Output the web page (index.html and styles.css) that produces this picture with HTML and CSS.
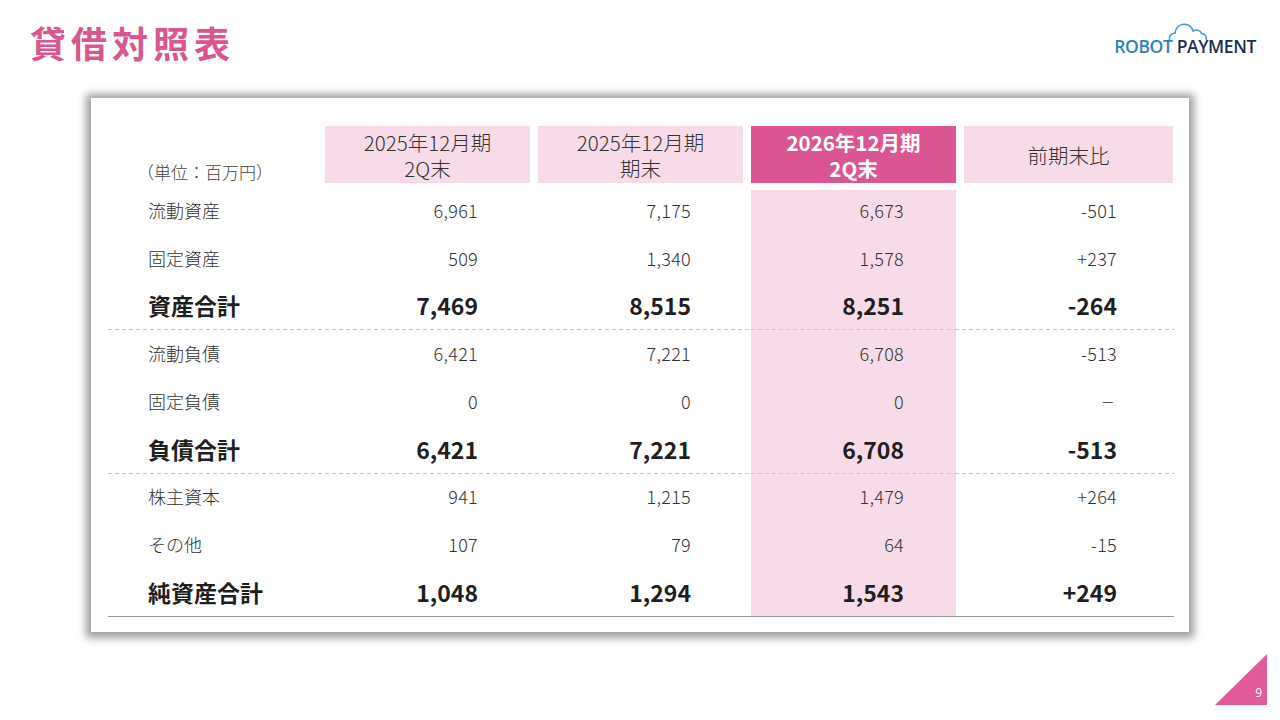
FILE: index.html
```html
<!DOCTYPE html>
<html lang="ja">
<head>
<meta charset="utf-8">
<title>貸借対照表</title>
<link rel="stylesheet" href="styles.css">
</head>
<body>
<div class="slide">
  <header class="top">
    <h1 class="title">貸借対照表</h1>
    <div class="logo">
      <svg class="cloud" viewBox="0 0 40 17" width="40" height="17">
        <path d="M1.5 16.5 C1.2 12.5 3.5 10 7 10.3 C7.5 4.5 11.5 1 16.5 1.2 C21 1.4 24 4.2 25 8 C28 6 32.5 7 33.5 10.5 C36.8 10.6 38.6 13 38.4 16.5" fill="none" stroke="#3f9ad6" stroke-width="1.6" stroke-linecap="round"/>
      </svg>
      <div class="logo-text"><span class="robot">ROBOT</span> <span class="payment">PAYMENT</span></div>
    </div>
  </header>

  <section class="card">
    <div class="grid head">
      <div class="unit">（単位：百万円）</div>
      <div class="hcell">2025年12月期<br>2Q末</div>
      <div class="hcell">2025年12月期<br>期末</div>
      <div class="hcell hl">2026年12月期<br>2Q末</div>
      <div class="hcell">前期末比</div>
    </div>

    <div class="body">
      <div class="grid row first">
        <div class="label">流動資産</div><div class="num">6,961</div><div class="num">7,175</div><div class="num pk">6,673</div><div class="num">-501</div>
      </div>
      <div class="grid row">
        <div class="label">固定資産</div><div class="num">509</div><div class="num">1,340</div><div class="num pk">1,578</div><div class="num">+237</div>
      </div>
      <div class="grid row total">
        <div class="label">資産合計</div><div class="num">7,469</div><div class="num">8,515</div><div class="num pk">8,251</div><div class="num">-264</div>
      </div>
      <div class="grid row sep">
        <div class="label">流動負債</div><div class="num">6,421</div><div class="num">7,221</div><div class="num pk">6,708</div><div class="num">-513</div>
      </div>
      <div class="grid row">
        <div class="label">固定負債</div><div class="num">0</div><div class="num">0</div><div class="num pk">0</div><div class="num dash">－</div>
      </div>
      <div class="grid row total">
        <div class="label">負債合計</div><div class="num">6,421</div><div class="num">7,221</div><div class="num pk">6,708</div><div class="num">-513</div>
      </div>
      <div class="grid row sep">
        <div class="label">株主資本</div><div class="num">941</div><div class="num">1,215</div><div class="num pk">1,479</div><div class="num">+264</div>
      </div>
      <div class="grid row">
        <div class="label">その他</div><div class="num">107</div><div class="num">79</div><div class="num pk">64</div><div class="num">-15</div>
      </div>
      <div class="grid row total last">
        <div class="label">純資産合計</div><div class="num">1,048</div><div class="num">1,294</div><div class="num pk">1,543</div><div class="num">+249</div>
      </div>
    </div>
  </section>

  <div class="pager"><span class="pno">9</span></div>
</div>
</body>
</html>
```

FILE: styles.css
```css
* { box-sizing: border-box; }
html, body { margin: 0; padding: 0; }
body {
  width: 1280px;
  height: 720px;
  overflow: hidden;
  background: #fff;
  font-family: "Noto Sans CJK JP", "Noto Sans", sans-serif;
  color: #333;
}
.slide {
  position: relative;
  width: 1280px;
  height: 720px;
}
.top {
  height: 98px;
  display: flex;
  justify-content: space-between;
  align-items: flex-start;
  padding: 0 24px 0 30px;
}
.title {
  margin: 24px 0 0;
  font-size: 36px;
  line-height: 36px;
  font-weight: 700;
  letter-spacing: 5px;
  color: #d9568e;
}
.logo {
  margin-top: 23px;
  display: flex;
  flex-direction: column;
}
.cloud {
  display: block;
  margin-left: 54px;
  margin-bottom: -3px;
}
.logo-text {
  font-family: "Open Sans", "Liberation Sans", sans-serif;
  font-weight: 600;
  font-size: 17.5px;
  line-height: 18px;
  letter-spacing: -0.4px;
  white-space: nowrap;
}
.robot { color: #2f7fc0; }
.payment { color: #1b2f58; }

.card {
  margin-left: 91px;
  width: 1098px;
  height: 534px;
  background: #fff;
  box-shadow: 0 1px 8px 5px rgba(0, 0, 0, 0.38);
  padding: 28px 15px 0 17px;
}
.grid {
  display: grid;
  grid-template-columns: 209px 205px 205px 205px 209px;
  column-gap: 8px;
}
.head {
  height: 57px;
  margin-bottom: 3px;
}
.unit {
  align-self: end;
  font-size: 17px;
  line-height: 20px;
  padding-left: 29px;
  padding-bottom: 1px;
  color: #444;
  font-weight: 300;
  white-space: nowrap;
}
.hcell {
  display: flex;
  align-items: center;
  justify-content: center;
  text-align: center;
  font-size: 20.5px;
  line-height: 26px;
  background: #f8dbe8;
  color: #333;
  font-weight: 300;
}
.hcell.hl {
  background: #db5592;
  color: #fff;
  font-weight: 700;
}
.row {
  height: 47.75px;
}
.row > div {
  display: flex;
  align-items: center;
  height: 100%;
}
.label {
  padding-left: 40px;
  font-size: 18px;
  color: #333;
  font-weight: 300;
}
.num {
  justify-content: flex-end;
  padding-right: 52px;
  font-size: 18px;
  color: #333;
  font-weight: 300;
  letter-spacing: 0.3px;
}
.num:last-child { padding-right: 56px; }
.num.dash { padding-right: 58px; font-size: 14px; }
.num.pk { background: #f8dbe8; }
.first .num.pk {
  background: linear-gradient(to bottom, transparent 4px, #f8dbe8 4px);
}
.total .label,
.total .num {
  font-size: 23px;
  font-weight: 700;
  color: #1f1f1f;
  letter-spacing: 0;
}
.sep {
  background-image: linear-gradient(to right, #c8c8c8 60%, transparent 60%);
  background-size: 7px 1px;
  background-repeat: repeat-x;
  background-position: 0 0;
}
.sep .num.pk {
  background-image: linear-gradient(to right, #c8c8c8 60%, transparent 60%), linear-gradient(#f8dbe8, #f8dbe8);
  background-size: 7px 1px, 100% 100%;
  background-repeat: repeat-x, no-repeat;
  background-position: 0 0, 0 0;
}
.last {
  border-bottom: 1px solid #9a9a9a;
  height: 48.75px;
}

.pager {
  position: absolute;
  right: 13px;
  bottom: 15px;
  width: 52px;
  height: 51px;
  background: #e05b98;
  clip-path: polygon(100% 0, 100% 100%, 0 100%);
}
.pno {
  position: absolute;
  right: 5px;
  bottom: 5px;
  font-family: "Open Sans", sans-serif;
  font-size: 12px;
  line-height: 14px;
  color: #fff;
}
```
